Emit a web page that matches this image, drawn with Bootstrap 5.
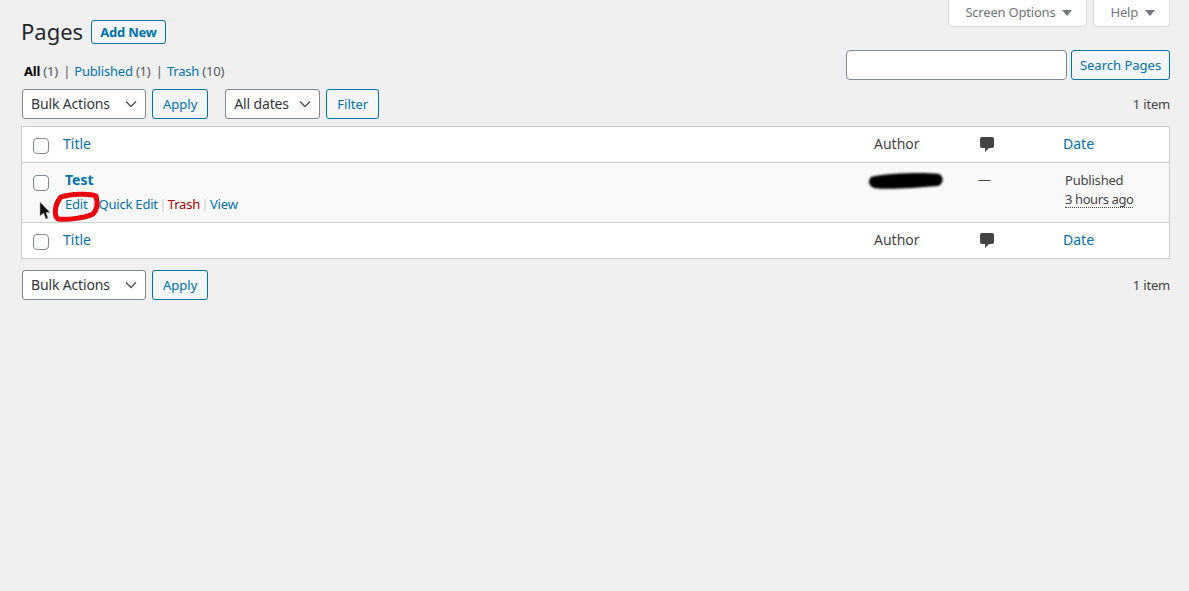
<!DOCTYPE html>
<html lang="en"><head><meta charset="utf-8"><title>Pages</title>
<link href="https://cdn.jsdelivr.net/npm/bootstrap@5.3.0/dist/css/bootstrap.min.css" rel="stylesheet">
<style>
html,body{height:100%}
body{background:#f0f0f1;color:#444;font-family:"Noto Sans","Open Sans",sans-serif;font-size:13px;line-height:1.4;letter-spacing:-.2px;position:relative;overflow:hidden}
a{color:#0073aa;text-decoration:none}
.wrap-area{padding:0 19px 0 21px}
.tabs-bar{height:28px;gap:6px}
.tab-link{background:#fff;border:1px solid #dcdcde;border-top:0;border-radius:0 0 4px 4px;height:28px;color:#72777c;padding:0 14px 0 16px;display:flex;align-items:center;gap:7px;margin-top:-1px}
.tab-arrow{width:0;height:0;border:5px solid transparent;border-top:6px solid #72777c;border-bottom:0}
.head-row{height:89px;margin-top:-28px;position:relative}
.page-title{font-size:22px;font-weight:400;color:#23282d;margin:0;line-height:32px;padding-top:15px;letter-spacing:0}
.btn-add{font-size:13px;font-weight:700;color:#0073aa;border:1px solid #0073aa;border-radius:3px;background:#f3f5f6;height:24px;line-height:22px;padding:0 8px;margin-left:8px;margin-top:20px}
.status-line{position:absolute;left:3px;top:62px;margin:0;white-space:nowrap}
.status-line b{color:#000}
.status-line .sep{margin:0 1px 0 2px;color:#50575e}
.count{color:#50575e}
.wp-btn{font-size:13px;color:#0073aa;border:1px solid #0073aa;background:#f3f5f6;border-radius:3px;height:30px;line-height:28px;padding:0 10px;white-space:nowrap}
.wp-select{font-size:14px;letter-spacing:-.15px;color:#32373c;border:1px solid #7e8993;border-radius:3px;height:30px;line-height:28px;padding:0 24px 0 8px;background-color:#fff;background-image:url("data:image/svg+xml,%3Csvg xmlns='http://www.w3.org/2000/svg' viewBox='0 0 12 8'%3E%3Cpath d='M1 1.500l5 5 5-5' fill='none' stroke='%23555' stroke-width='1.500'/%3E%3C/svg%3E");background-size:12px 8px;background-position:right 8px center;box-shadow:none}
.search-box{margin-top:50px;gap:4px}
.search-input{width:221px;height:30px;border:1px solid #7e8993;border-radius:4px;background:#fff;box-shadow:none}
.search-btn{width:99px;padding:0;text-align:center}
.nav-row{height:37px;padding-left:1px;gap:6px;padding-bottom:7px}
.gap-left{margin-left:11px}
.bulk-select{width:124px}
.date-select{width:95px}
.item-count{margin-left:auto}
.bottom-nav{margin-top:11px}
.pages-table{width:1149px;table-layout:fixed;border:1px solid #ccd0d4;background:#fff;margin:0;--bs-table-bg:transparent;--bs-table-color:#444;border-collapse:separate;border-spacing:0}
.pages-table th,.pages-table td{padding:0;border:0;font-weight:400;vertical-align:top;letter-spacing:0}
.pages-table .head-cell{height:36px;vertical-align:middle;font-size:14px;padding-bottom:2px}
.pages-table thead th{border-bottom:1px solid #ccd0d4}
.pages-table tfoot th{border-top:1px solid #ccd0d4}
.pages-table tbody td{background:#f9f9f9;height:59px;padding-top:7px;font-size:13px;letter-spacing:-.2px;color:#444}
.wp-check{appearance:none;display:block;width:16px;height:16px;margin:0;border:1px solid #7e8993;border-radius:4px;background:#fff}
.pages-table thead .wp-check,.pages-table tfoot .wp-check{margin:4px 0 0 11px}
.pages-table tbody .wp-check{margin:5px 0 0 11px}
.row-title{font-weight:700;font-size:14px;margin-left:2px;display:block;line-height:20px;letter-spacing:0}
.row-actions{margin-left:2px;margin-top:4px;line-height:20px;white-space:nowrap}
.row-actions i{font-style:normal;color:#ccd0d4;margin:0 1.500px}
.row-actions a:first-child{margin-right:1px}
.trash-link{color:#a00}
.no-comments{margin-left:-2px}
.date-cell{padding-left:2px!important}
.date-ago{border-bottom:1px dotted #444;line-height:15px;display:inline-block;letter-spacing:-.4px}
.date-line{line-height:20px}
.date-line+.date-line{margin-top:-1px}
.bubble{display:block;margin-top:2px}
.draw-layer{position:absolute;left:0;top:0;pointer-events:none}
</style></head>
<body>
<div class="wrap-area">
  <div class="d-flex justify-content-end tabs-bar">
    <div class="tab-link">Screen Options <span class="tab-arrow"></span></div>
    <div class="tab-link">Help <span class="tab-arrow"></span></div>
  </div>
  <div class="head-row d-flex justify-content-between">
    <div class="d-flex align-items-start">
      <h1 class="page-title">Pages</h1>
      <a class="btn-add" href="#">Add New</a>
      <p class="status-line"><b>All</b> <span class="count">(1)</span><span class="sep"> |</span> <a href="#">Published</a> <span class="count">(1)</span><span class="sep"> |</span> <a href="#">Trash</a> <span class="count">(10)</span></p>
    </div>
    <div class="d-flex align-items-start search-box">
      <input class="search-input" type="text" aria-label="Search">
      <button class="wp-btn search-btn">Search Pages</button>
    </div>
  </div>
  <div class="d-flex align-items-start nav-row">
    <select class="form-select wp-select bulk-select"><option>Bulk Actions</option></select>
    <button class="wp-btn">Apply</button>
    <select class="form-select wp-select date-select gap-left"><option>All dates</option></select>
    <button class="wp-btn">Filter</button>
    <span class="item-count align-self-center">1 item</span>
  </div>
  <table class="table pages-table">
    <colgroup><col style="width:41px"><col style="width:811px"><col style="width:106px"><col style="width:83px"><col></colgroup>
    <thead><tr>
      <th class="head-cell"><input class="wp-check" type="checkbox" aria-label="All"></th>
      <th class="head-cell"><a href="#">Title</a></th>
      <th class="head-cell">Author</th>
      <th class="head-cell"><svg class="bubble" width="14" height="16" viewBox="0 0 14 16"><path fill="#444" d="M2 0h10a2 2 0 0 1 2 2v7a2 2 0 0 1-2 2H9l-4 4v-4H2a2 2 0 0 1-2-2V2a2 2 0 0 1 2-2z"/></svg></th>
      <th class="head-cell"><a href="#">Date</a></th>
    </tr></thead>
    <tbody><tr>
      <td><input class="wp-check" type="checkbox" aria-label="Test"></td>
      <td><a class="row-title" href="#">Test</a>
        <div class="row-actions"><a href="#">Edit</a><i>|</i><a href="#">Quick Edit</a><i>|</i><a class="trash-link" href="#">Trash</a><i>|</i><a href="#">View</a></div></td>
      <td></td>
      <td><span class="no-comments">—</span></td>
      <td class="date-cell"><div class="date-line">Published</div><div class="date-line"><span class="date-ago">3 hours ago</span></div></td>
    </tr></tbody>
    <tfoot><tr>
      <th class="head-cell"><input class="wp-check" type="checkbox" aria-label="All"></th>
      <th class="head-cell"><a href="#">Title</a></th>
      <th class="head-cell">Author</th>
      <th class="head-cell"><svg class="bubble" width="14" height="16" viewBox="0 0 14 16"><path fill="#444" d="M2 0h10a2 2 0 0 1 2 2v7a2 2 0 0 1-2 2H9l-4 4v-4H2a2 2 0 0 1-2-2V2a2 2 0 0 1 2-2z"/></svg></th>
      <th class="head-cell"><a href="#">Date</a></th>
    </tr></tfoot>
  </table>
  <div class="d-flex align-items-start nav-row bottom-nav">
    <select class="form-select wp-select bulk-select"><option>Bulk Actions</option></select>
    <button class="wp-btn">Apply</button>
    <span class="item-count align-self-center">1 item</span>
  </div>
</div>
<svg class="draw-layer" width="1189" height="591" aria-hidden="true">
  <defs><filter id="soft"><feGaussianBlur stdDeviation="1"/></filter></defs>
  <path d="M871 177C885 173 928 172 939 174C944 176 944 184 938 186C915 188 885 190 874 188C868 186 868 180 871 177Z" fill="#000" filter="url(#soft)"/>
  <path d="M61 197C70 194 90 193 96 196C98 203 97 210 93 214C85 218 68 220 58 219C54 216 54 205 61 197Z" fill="none" stroke="#e8000d" stroke-width="5" stroke-linejoin="round"/>
  <path d="M40 202V216L43.500 213L46 219L48 218L46 212.500H50Z" fill="#000" stroke="#bbb" stroke-width=".6"/>
</svg>
<script src="https://cdn.jsdelivr.net/npm/bootstrap@5.3.0/dist/js/bootstrap.bundle.min.js"></script>
</body></html>
